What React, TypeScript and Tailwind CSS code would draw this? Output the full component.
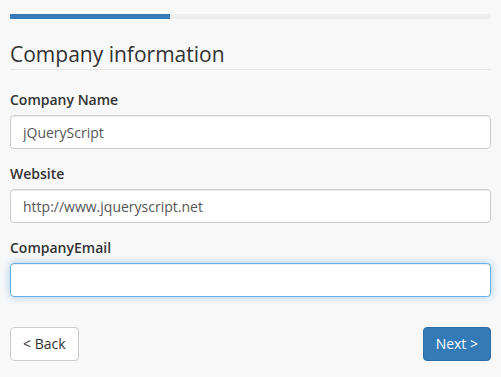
export default function App() {
  return (
    <div className="min-h-[377px] bg-[#f8f8f8] px-[10px] pt-[14px] text-[14px] leading-[20px] text-[#333] [font-family:'Open_Sans',sans-serif]">
      <div className="h-[5px] w-full bg-[#eeeeee]">
        <div className="h-full w-1/3 bg-[#337ab7]" />
      </div>

      <form className="mt-[20px]" onSubmit={e => e.preventDefault()}>
        <div className="mb-[20px] border-b border-[#e5e5e5] text-[21px] leading-[30px] text-[#333]">
          Company information
        </div>

        <div className="mb-[15px]">
          <label className="mb-[5px] block font-semibold">Company Name</label>
          <input
            defaultValue="jQueryScript"
            className="block h-[34px] w-full rounded-[4px] border border-[#ccc] bg-white px-[12px] text-[14px] text-[#555] shadow-[inset_0_1px_1px_rgba(0,0,0,0.075)] outline-none"
          />
        </div>

        <div className="mb-[15px]">
          <label className="mb-[5px] block font-semibold">Website</label>
          <input
            defaultValue="http://www.jqueryscript.net"
            className="block h-[34px] w-full rounded-[4px] border border-[#ccc] bg-white px-[12px] text-[14px] text-[#555] shadow-[inset_0_1px_1px_rgba(0,0,0,0.075)] outline-none"
          />
        </div>

        <div className="mb-[30px]">
          <label className="mb-[5px] block font-semibold">CompanyEmail</label>
          <input
            className="block h-[34px] w-full rounded-[4px] border border-[#66afe9] bg-white px-[12px] text-[14px] text-[#555] shadow-[inset_0_1px_1px_rgba(0,0,0,0.075),0_0_8px_rgba(102,175,233,0.6)] outline-none"
          />
        </div>

        <div className="flex items-center justify-between">
          <button
            type="button"
            className="h-[34px] rounded-[4px] border border-[#ccc] bg-white px-[12px] text-[14px] text-[#333]"
          >
            &lt; Back
          </button>
          <button
            type="button"
            className="h-[34px] rounded-[4px] border border-[#2e6da4] bg-[#337ab7] px-[12px] text-[14px] text-white"
          >
            Next &gt;
          </button>
        </div>
      </form>
    </div>
  )
}
